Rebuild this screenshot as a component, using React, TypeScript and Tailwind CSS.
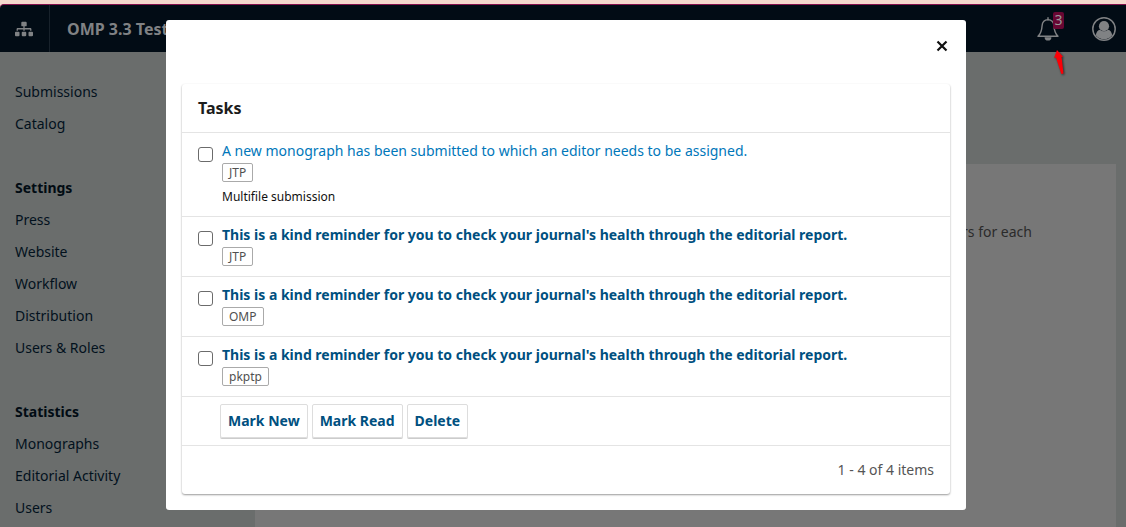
import { FaSitemap } from "react-icons/fa";

const navGroups = [
  { title: "", links: ["Submissions", "Catalog"] },
  { title: "Settings", links: ["Press", "Website", "Workflow", "Distribution", "Users & Roles"] },
  { title: "Statistics", links: ["Monographs", "Editorial Activity", "Users"] },
];

const reminder =
  "This is a kind reminder for you to check your journal's health through the editorial report.";

const tasks = [
  {
    text: "A new monograph has been submitted to which an editor needs to be assigned.",
    context: "JTP",
    details: "Multifile submission",
    unread: false,
  },
  { text: reminder, context: "JTP", details: "", unread: true },
  { text: reminder, context: "OMP", details: "", unread: true },
  { text: reminder, context: "pkptp", details: "", unread: true },
];

function BellIcon() {
  return (
    <svg viewBox="0 0 22 24" className="h-6 w-[22px]" fill="none" stroke="currentColor" strokeWidth="1.4" aria-hidden="true">
      <path d="M11 2.6C7.4 2.8 5.400 5.200 5.100 8.600 4.800 13.500 4.200 16.200 1 19.300h20c-3.200-3.100-3.800-5.800-4.100-10.700C16.600 5.200 14.600 2.800 11 2.600Z" strokeLinejoin="round" />
      <path d="M11 .8v2" strokeLinecap="round" />
      <path d="M7.600 20.200h6.800a3.400 3.400 0 0 1-6.800 0Z" fill="currentColor" stroke="none" />
    </svg>
  );
}

function UserIcon() {
  return (
    <svg viewBox="0 0 24 24" className="size-6" aria-hidden="true">
      <circle cx="12" cy="12" r="11.200" fill="none" stroke="currentColor" strokeWidth="1.500" />
      <circle cx="12" cy="9.200" r="5.100" fill="currentColor" />
      <path d="M3.800 18.300c.4-3 1.900-5.200 4.200-5.500a5.900 5.900 0 0 0 8 0c2.300.3 3.800 2.500 4.200 5.500a10.300 10.300 0 0 1-16.400 0Z" fill="currentColor" />
    </svg>
  );
}

function Header() {
  return (
    <header className="flex h-12 items-center rounded-tl border-t border-[#85124c] bg-[#020c15] text-[#808284]">
      <button aria-label="Contexts" className="flex h-full w-[50px] items-center justify-center border-r border-[#18222b] pr-[2px]">
        <FaSitemap className="size-[18px]" />
      </button>
      <a href="#" className="px-[17px] text-base font-bold">OMP 3.3 Test</a>
      <div className="ml-auto flex items-center gap-[33px] pr-[10px]">
        <button aria-label="Tasks" className="relative">
          <BellIcon />
          <span className="absolute -top-[5px] left-4 flex h-[17px] w-[11px] items-center justify-center rounded-xs bg-[#680733] text-sm leading-none text-[#999]">
            3
          </span>
        </button>
        <button aria-label="Account">
          <UserIcon />
        </button>
      </div>
    </header>
  );
}

function Sidebar() {
  return (
    <nav className="flex w-[255px] shrink-0 flex-col gap-8 pt-6 pl-[15px] text-sm text-[#02111d]">
      {navGroups.map((group) => (
        <div key={group.title}>
          {group.title && <h2 className="leading-8 font-bold text-[#010b13]">{group.title}</h2>}
          <ul>
            {group.links.map((link) => (
              <li key={link} className="leading-8">
                <a href="#">{link}</a>
              </li>
            ))}
          </ul>
        </div>
      ))}
    </nav>
  );
}

function TaskRow({ task, id }: { task: (typeof tasks)[number]; id: string }) {
  return (
    <li className="flex gap-[9px] border-t border-[#e4e4e4] px-4 pt-2 pb-[10px]">
      <input
        id={id}
        type="checkbox"
        className="mt-[6px] size-[15px] shrink-0 appearance-none rounded-[3px] border border-[#6b6b6b] bg-white checked:bg-[#006798]"
      />
      <div className="min-w-0 flex-1">
        <label
          htmlFor={id}
          className={task.unread ? "block text-sm font-bold text-[#00507f]" : "block text-sm text-[#0077ba]"}
        >
          {task.text}
        </label>
        <span className="mt-[2px] block h-[19px] w-fit rounded-xs border border-[#aaa] px-[6px] text-xs leading-[17px] text-[#505050]">
          {task.context}
        </span>
        {task.details && <p className="pt-[6px] text-xs leading-[18px] text-[#111]">{task.details}</p>}
      </div>
    </li>
  );
}

function TasksModal() {
  return (
    <div className="absolute inset-x-0 top-5 flex justify-center pr-4 pl-[22px]">
      <section role="dialog" aria-label="Tasks" className="w-full max-w-[800px] rounded-[3px] bg-white px-4 pb-4">
        <div className="flex h-16 justify-end pt-[18px]">
          <button aria-label="Close" className="flex size-4 items-center justify-center text-[#111]">
            <svg viewBox="0 0 12 12" className="size-3" stroke="currentColor" strokeWidth="2.200" aria-hidden="true">
              <path d="m1.500 1.500 9 9m0-9-9 9" />
            </svg>
          </button>
        </div>
        <div className="rounded-[3px] shadow-[0_1px_2px_rgba(0,0,0,0.4)]">
          <h1 className="px-4 text-base leading-[48px] font-bold text-[#1c1c1c]">Tasks</h1>
          <ul>
            {tasks.map((task, index) => (
              <TaskRow key={index} task={task} id={`task-${index}`} />
            ))}
          </ul>
          <div className="flex gap-1 border-t border-[#e4e4e4] py-[7px] pl-[38px]">
            {["Mark New", "Mark Read", "Delete"].map((label) => (
              <button
                key={label}
                className="h-[34px] rounded-xs border border-[#ddd] px-[7px] text-sm font-bold text-[#00507f] shadow-[0_1px_0_#ccc]"
              >
                {label}
              </button>
            ))}
          </div>
          <p className="border-t border-[#e4e4e4] px-4 text-right text-sm leading-[48px] text-[#555]">1 - 4 of 4 items</p>
        </div>
      </section>
    </div>
  );
}

export default function App() {
  return (
    <div className="relative flex min-h-screen flex-col bg-[#f5d9cd] pt-1 font-['Noto_Sans',sans-serif]">
      <Header />
      <div className="flex flex-1 bg-[#6a6d6c]">
        <Sidebar />
        <main className="mt-28 mr-[10px] flex-1 bg-[#777] px-[84px] pt-14 text-right text-sm leading-6 text-[#2b2b2b]">
          <p>rs for each</p>
        </main>
      </div>
      <TasksModal />
      <svg viewBox="0 0 14 28" className="absolute top-[49px] right-[59px] h-7 w-[14px] drop-shadow-[1px_1px_1px_rgba(0,0,0,0.6)]" aria-hidden="true">
        <path d="M4 1 1 9l2-.4L8.300 25l2.200-.6L8.600 8l1.400-.2Z" fill="#fb0007" />
      </svg>
    </div>
  );
}
